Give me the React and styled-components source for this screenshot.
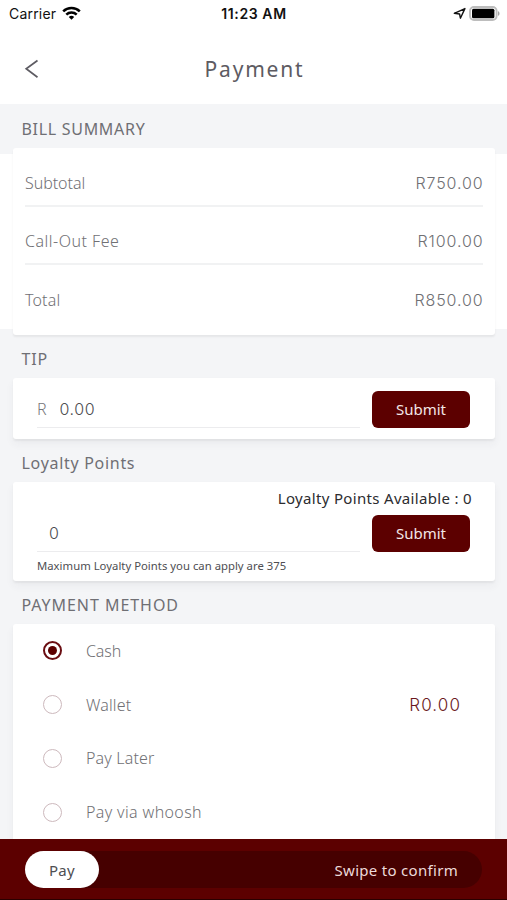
import { useState } from "react"
import styled, { createGlobalStyle } from "styled-components"

const GlobalStyle = createGlobalStyle`
  * {
    box-sizing: border-box;
  }

  body {
    margin: 0;
    background-color: #f4f5f7;
    font-family: "Noto Sans", "Open Sans", sans-serif;
  }

  button, input {
    font-family: inherit;
  }
`

const Screen = styled.div`
  width: 100%;
  height: 900px;
  overflow: hidden;
  display: flex;
  flex-direction: column;
  background-color: #f4f5f7;
`

const StatusBar = styled.div`
  height: 28px;
  flex-shrink: 0;
  padding: 0 7px 2px 9px;
  display: grid;
  grid-template-columns: 1fr auto 1fr;
  align-items: center;
  background-color: white;
  color: #111;
  font-family: Inter, Roboto, sans-serif;
  font-size: 14px;
  letter-spacing: 0.2px;

  .carrier, .indicators {
    display: flex;
    align-items: center;
  }

  .carrier {
    gap: 6px;
  }

  .time {
    font-weight: 600;
    letter-spacing: 0.6px;
    margin-left: -1px;
  }

  .indicators {
    justify-content: flex-end;
    gap: 3px;
  }
`

const Header = styled.header`
  height: 76px;
  flex-shrink: 0;
  padding: 0 24px;
  display: grid;
  grid-template-columns: 40px 1fr 40px;
  align-items: center;
  background-color: white;

  h1 {
    margin: 0;
    padding: 5px 0 0 2px;
    text-align: center;
    font-size: 21px;
    font-weight: 400;
    line-height: 28px;
    letter-spacing: 1.8px;
    color: #5d5b62;
  }
`

const BackButton = styled.button`
  border: none;
  background: none;
  padding: 5px 0 0;
  display: flex;
  cursor: pointer;
`

const SectionTitle = styled.h2`
  margin: 0;
  padding-left: 21.5px;
  height: ${props => props.$height}px;
  flex-shrink: 0;
  display: flex;
  align-items: center;
  padding-top: 5px;
  font-size: 16px;
  font-weight: 400;
  letter-spacing: ${props => props.$spacing}px;
  color: #6f6f74;
`

const BillBand = styled.div`
  height: 187px;
  flex-shrink: 0;
  padding: 0 12px 0 13px;
  background: linear-gradient(#f4f5f7 6px, white 6px, white 181px, #f4f5f7 181px);
`

const BillCard = styled.div`
  height: 187px;
  padding: 0 12px;
  background-color: white;
  border-radius: 3px;
  box-shadow: 0 2px 2px rgba(60, 64, 70, 0.08);
`

const BillRow = styled.div`
  height: 58.5px;
  padding-top: ${props => props.$first ? "13px" : props.$last ? "11px" : "12.5px"};
  display: flex;
  justify-content: space-between;
  align-items: center;
  border-bottom: ${props => props.$last ? "none" : "2px solid #f1f2f3"};
  font-size: 16px;
  color: #707074;

  .label {
    font-weight: 300;
    letter-spacing: ${props => props.$spacing}px;
  }

  .amount {
    font-family: Inter, "Noto Sans", sans-serif;
    font-weight: 350;
    letter-spacing: 0.9px;
    margin-right: -0.5px;
  }
`

const Card = styled.div`
  height: ${props => props.$height}px;
  flex-shrink: 0;
  margin: 0 12px 0 13px;
  padding: ${props => props.$padding};
  background-color: white;
  border-radius: ${props => props.$cut ? "3px 3px 0 0" : "3px"};
  box-shadow: 0 2px 2px rgba(60, 64, 70, 0.06), 0 5px 9px rgba(60, 64, 70, 0.05);
`

const FormRow = styled.div`
  display: flex;
  height: 37px;
`

const Field = styled.label`
  flex: 1;
  display: flex;
  align-items: center;
  margin-right: 12px;
  border-bottom: 1px solid #ececee;
  font-size: 16px;
  font-weight: 300;
  color: #77777b;

  .prefix {
    width: 22.5px;
  }

  input {
    min-width: 0;
    flex: 1;
    height: 34px;
    border: none;
    outline: none;
    padding: 0;
    padding-left: ${props => props.$inset || 0}px;
    font-family: Inter, "Noto Sans", sans-serif;
    font-size: 16px;
    font-weight: 350;
    letter-spacing: 0.6px;
    color: #4e4e52;
    background: none;
  }
`

const SubmitButton = styled.button`
  width: 98px;
  height: 37px;
  border: none;
  border-radius: 6px;
  padding: 0 0 2px;
  background-color: #5c0000;
  color: #f3e6e6;
  font-size: 15px;
  cursor: pointer;
`

const PointsAvailable = styled.p`
  margin: 0 -2px 0 0;
  height: 33px;
  line-height: 32px;
  text-align: right;
  font-size: 15px;
  letter-spacing: 0.33px;
  color: #2c2c2f;
`

const Hint = styled.p`
  margin: 6px 0 0;
  font-size: 11.3px;
  line-height: 16px;
  letter-spacing: 0.02px;
  color: #4e4e52;
`

const Option = styled.div`
  height: 53.8px;
  display: flex;
  align-items: center;
  cursor: pointer;

  .name {
    margin-left: 24px;
    flex: 1;
    font-size: 16px;
    font-weight: 300;
    letter-spacing: ${props => props.$spacing}px;
    color: #707074;
  }

  .balance {
    font-family: Inter, "Noto Sans", sans-serif;
    font-size: 17px;
    font-weight: 350;
    letter-spacing: 1.1px;
    color: #6a1820;
  }
`

const Radio = styled.span`
  width: 19px;
  height: 19px;
  border-radius: 50%;
  border: ${props => props.$checked ? "2px solid #6a0d12" : "1.5px solid #cdb9bd"};
  display: flex;
  align-items: center;
  justify-content: center;

  &::after {
    content: "";
    display: ${props => props.$checked ? "block" : "none"};
    width: 9px;
    height: 9px;
    border-radius: 50%;
    background-color: #5c0000;
  }
`

const Footer = styled.footer`
  height: 61px;
  flex-shrink: 0;
  position: relative;
  padding: 12px 25px 0;
  background-color: #5c0000;
  border-bottom: 1px solid #2a0000;
`

const SwipeTrack = styled.div`
  height: 37px;
  border-radius: 19px;
  display: flex;
  align-items: center;
  justify-content: space-between;
  padding-right: 24px;
  background-color: #460000;
  color: #ecdada;
  font-size: 15px;
  letter-spacing: 0.3px;
`

const PayKnob = styled.button`
  width: 74px;
  height: 37px;
  border: none;
  border-radius: 19px;
  background-color: white;
  color: #4e4e52;
  font-size: 15px;
  letter-spacing: 0.3px;
  cursor: pointer;
`

const bill = [
  { label: "Subtotal", amount: "R750.00", spacing: -0.05 },
  { label: "Call-Out Fee", amount: "R100.00", spacing: 0.5 },
  { label: "Total", amount: "R850.00", spacing: 0.15 },
]

const methods = [
  { name: "Cash", spacing: -0.1 },
  { name: "Wallet", balance: "R0.00", spacing: 0.15 },
  { name: "Pay Later", spacing: 0.15 },
  { name: "Pay via whoosh", spacing: 0.36 },
]

function WifiIcon() {
  return (
    <svg width="19" height="15" viewBox="0 0 19 15" fill="none" stroke="#000" strokeWidth="2.5">
      <path d="M1.2 5.4a11.8 11.8 0 0 1 16.6 0" />
      <path d="M4.3 8.7a7.4 7.4 0 0 1 10.4 0" />
      <path d="M9.5 13.8L6.8 11a3.9 3.9 0 0 1 5.4 0z" fill="#000" stroke="none" />
    </svg>
  )
}

function LocationIcon() {
  return (
    <svg width="13" height="13" viewBox="0 0 13 13" fill="none" stroke="#111" strokeWidth="1.4" strokeLinejoin="round">
      <path d="M11.9 1.6L7.4 11.2L6.6 7L1.3 6.3z" />
    </svg>
  )
}

function BatteryIcon() {
  return (
    <svg width="31" height="15" viewBox="0 0 31 15">
      <rect x="1" y="1" width="26.6" height="13" rx="4" fill="white" stroke="#bdbdbd" strokeWidth="1.9" />
      <rect x="3" y="2.8" width="22.4" height="9.4" rx="1.5" fill="#000" />
      <path d="M29 5.2c2 .7 2 3.9 0 4.6z" fill="#a5a5a5" />
    </svg>
  )
}

function App() {
  const [method, setMethod] = useState("Cash")

  return (
    <>
      <GlobalStyle />
      <Screen>
        <StatusBar>
          <div className="carrier">
            <span>Carrier</span>
            <WifiIcon />
          </div>
          <span className="time">11:23 AM</span>
          <div className="indicators">
            <LocationIcon />
            <BatteryIcon />
          </div>
        </StatusBar>

        <Header>
          <BackButton aria-label="Back">
            <svg width="16" height="20" viewBox="0 0 16 20" fill="none" stroke="#5d5b62" strokeWidth="1.7">
              <path d="M13.5 1.5L2.2 9.8L13.5 18.2" />
            </svg>
          </BackButton>
          <h1>Payment</h1>
        </Header>

        <SectionTitle $height={44} $spacing={0.7}>BILL SUMMARY</SectionTitle>
        <BillBand>
          <BillCard>
            {bill.map((row, i) => (
              <BillRow key={row.label} $first={i === 0} $last={i === bill.length - 1} $spacing={row.spacing}>
                <span className="label">{row.label}</span>
                <span className="amount">{row.amount}</span>
              </BillRow>
            ))}
          </BillCard>
        </BillBand>

        <SectionTitle $height={43} $spacing={0.8}>TIP</SectionTitle>
        <Card $height={61} $padding="13px 25px 0 24px">
          <FormRow>
            <Field>
              <span className="prefix">R</span>
              <input defaultValue="0.00" />
            </Field>
            <SubmitButton>Submit</SubmitButton>
          </FormRow>
        </Card>

        <SectionTitle $height={43} $spacing={0.7}>Loyalty Points</SectionTitle>
        <Card $height={99} $padding="0 25px 0 24px">
          <PointsAvailable>Loyalty Points Available : 0</PointsAvailable>
          <FormRow>
            <Field $inset={12}>
              <input defaultValue="0" />
            </Field>
            <SubmitButton>Submit</SubmitButton>
          </FormRow>
          <Hint>Maximum Loyalty Points you can apply are 375</Hint>
        </Card>

        <SectionTitle $height={43} $spacing={0.95}>PAYMENT METHOD</SectionTitle>
        <Card $height={215} $padding="0 34px 0 30px" $cut>
          {methods.map(item => (
            <Option key={item.name} $spacing={item.spacing} onClick={() => setMethod(item.name)}>
              <Radio $checked={method === item.name} />
              <span className="name">{item.name}</span>
              {item.balance && <span className="balance">{item.balance}</span>}
            </Option>
          ))}
        </Card>

        <Footer>
          <SwipeTrack>
            <PayKnob>Pay</PayKnob>
            <span>Swipe to confirm</span>
          </SwipeTrack>
        </Footer>
      </Screen>
    </>
  )
}

export default App
